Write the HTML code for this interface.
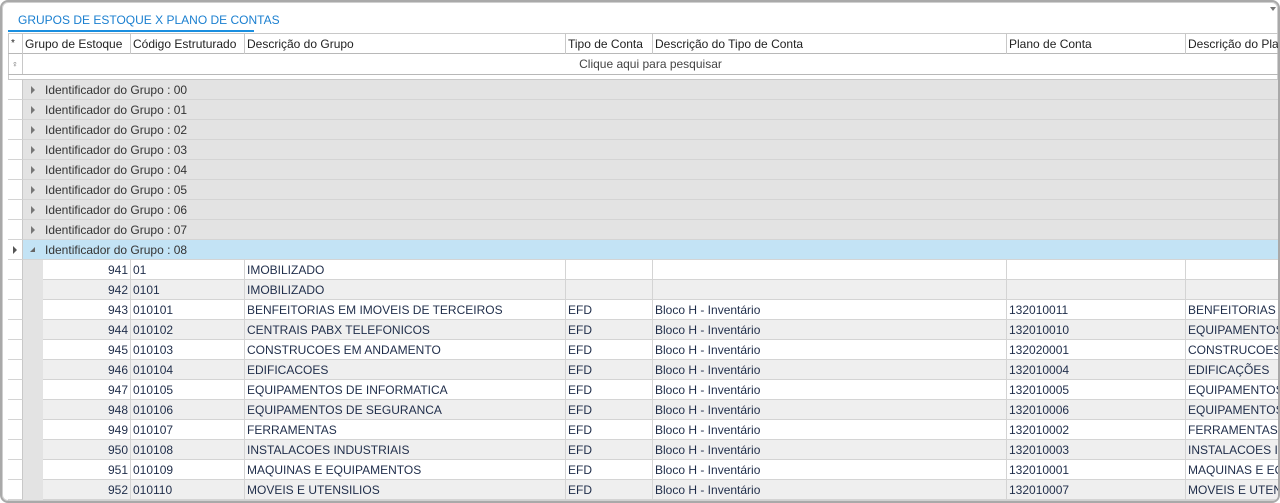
<!DOCTYPE html>
<html><head><meta charset="utf-8"><style>
*{margin:0;padding:0;box-sizing:border-box}
body{width:1280px;height:503px;overflow:hidden;background:#fff;font-family:"Liberation Sans",sans-serif;font-size:12px;color:#333}
.frame{position:absolute;left:0;top:0;width:1280px;height:503px;border:2px solid #a9a9a9;border-radius:8px;background:#fff;overflow:hidden;box-shadow:inset 0 0 0 1px #d0d0d0}
.a{position:absolute}
.tab{left:16px;top:11px;color:#1a7fd0;font-size:12px}
.tabline{left:6px;top:28px;width:246px;height:2px;background:#1a8fe0}
.cell{position:absolute;height:20px;line-height:20px;white-space:nowrap;overflow:hidden;padding-left:2px;border-right:1px solid #d4d4d4}
.hdr .cell{border-right:1px solid #c8c8c8;color:#222}
.row{position:absolute;left:6px;width:1270px;height:20px;border-bottom:1px solid #d4d4d4}
.grp{background:#e3e3e3}
.grp span{position:absolute;top:0;line-height:20px;color:#333}
.tri{position:absolute;top:6px;width:0;height:0;border-left:4px solid #777;border-top:4px solid transparent;border-bottom:4px solid transparent}
.ind{position:absolute;left:6px;width:14px;height:20px;border-right:1px solid #c8c8c8;border-bottom:1px solid #d4d4d4;background:#fff}
.d{color:#1f2d4a}
</style></head><body><div class="frame">
<div class="a tab">GRUPOS DE ESTOQUE X PLANO DE CONTAS</div>
<div class="a tabline"></div>
<div class="a" style="left:1268px;top:5px;border-top:4px solid #777;border-left:3px solid transparent;border-right:3px solid transparent"></div>
<div class="a" style="left:6px;top:31px;width:1270px;height:1px;background:#c8c8c8"></div>
<div class="a" style="left:6px;top:31px;width:1px;height:470px;background:#c8c8c8"></div>
<div class="a hdr" style="left:6px;top:32px;width:1270px;height:20px;border-bottom:1px solid #b8b8b8">
<div class="cell" style="left:0;width:15px;font-size:10px;padding-left:3px">*</div>
<div class="cell" style="left:15px;width:108px">Grupo de Estoque</div>
<div class="cell" style="left:123px;width:114px">Código Estruturado</div>
<div class="cell" style="left:237px;width:321px">Descrição do Grupo</div>
<div class="cell" style="left:558px;width:87px">Tipo de Conta</div>
<div class="cell" style="left:645px;width:354px">Descrição do Tipo de Conta</div>
<div class="cell" style="left:999px;width:179px">Plano de Conta</div>
<div class="cell" style="left:1178px;width:93px;border-right:none">Descrição do Plano</div>
</div>
<div class="a" style="left:6px;top:52px;width:1270px;height:21px;border-bottom:1px solid #b8b8b8">
<div class="a" style="left:0;top:0;width:15px;height:20px;border-right:1px solid #c8c8c8;font-size:9px;line-height:20px;text-align:center;color:#555">♀</div>
<div class="a" style="left:15px;width:1255px;text-align:center;line-height:20px;color:#444">Clique aqui para pesquisar</div>
</div>
<div class="a" style="left:6px;top:77px;width:1270px;height:1px;background:#c8c8c8"></div>
</div>
<script>
var f=document.querySelector('.frame'),h='';
for(var i=0;i<9;i++){var t=78+i*20;
var sel=i==8;
h+='<div class="ind" style="top:'+t+'px;width:15px">'+(sel?'<div style="position:absolute;left:5px;top:6px;border-left:4px solid #555;border-top:4px solid transparent;border-bottom:4px solid transparent"></div>':'')+'</div>';
h+='<div class="row grp" style="left:21px;width:1255px;top:'+t+'px;'+(sel?'background:#c3e3f5':'')+'">'+(sel?'<div style="position:absolute;left:7px;top:7px;border-right:5px solid #666;border-top:5px solid transparent"></div>':'<div class="tri" style="left:8px"></div>')+'<span style="left:22px">Identificador do Grupo : 0'+i+'</span></div>';}
var D=[[941,'01','IMOBILIZADO','','','',''],[942,'0101','IMOBILIZADO','','','',''],
[943,'010101','BENFEITORIAS EM IMOVEIS DE TERCEIROS','EFD','Bloco H - Inventário','132010011','BENFEITORIAS EM'],
[944,'010102','CENTRAIS PABX TELEFONICOS','EFD','Bloco H - Inventário','132010010','EQUIPAMENTOS'],
[945,'010103','CONSTRUCOES EM ANDAMENTO','EFD','Bloco H - Inventário','132020001','CONSTRUCOES E'],
[946,'010104','EDIFICACOES','EFD','Bloco H - Inventário','132010004','EDIFICAÇÕES'],
[947,'010105','EQUIPAMENTOS DE INFORMATICA','EFD','Bloco H - Inventário','132010005','EQUIPAMENTOS'],
[948,'010106','EQUIPAMENTOS DE SEGURANCA','EFD','Bloco H - Inventário','132010006','EQUIPAMENTOS'],
[949,'010107','FERRAMENTAS','EFD','Bloco H - Inventário','132010002','FERRAMENTAS'],
[950,'010108','INSTALACOES INDUSTRIAIS','EFD','Bloco H - Inventário','132010003','INSTALACOES IND'],
[951,'010109','MAQUINAS E EQUIPAMENTOS','EFD','Bloco H - Inventário','132010001','MAQUINAS E EQU'],
[952,'010110','MOVEIS E UTENSILIOS','EFD','Bloco H - Inventário','132010007','MOVEIS E UTENS']];
var L=[[41,88],[129,114],[243,321],[564,87],[651,354],[1005,179],[1184,95]];
D.forEach(function(r,k){var t=258+k*20,bg=k%2?'#efefef':'#fff';
h+='<div class="ind" style="top:'+t+'px;width:15px"></div><div class="a" style="left:21px;top:'+t+'px;width:20px;height:20px;background:#e3e3e3"></div>';
h+='<div class="a" style="left:41px;top:'+t+'px;width:1235px;height:20px;background:'+bg+';border-bottom:1px solid #d4d4d4"></div>';
r.forEach(function(v,j){h+='<div class="cell d" style="top:'+t+'px;left:'+L[j][0]+'px;width:'+L[j][1]+'px;'+(j==0?'text-align:right;padding-right:2px;':'')+(j==6?'border-right:none;':'')+'">'+v+'</div>';});});
f.insertAdjacentHTML('beforeend',h);
</script>
</body></html>
